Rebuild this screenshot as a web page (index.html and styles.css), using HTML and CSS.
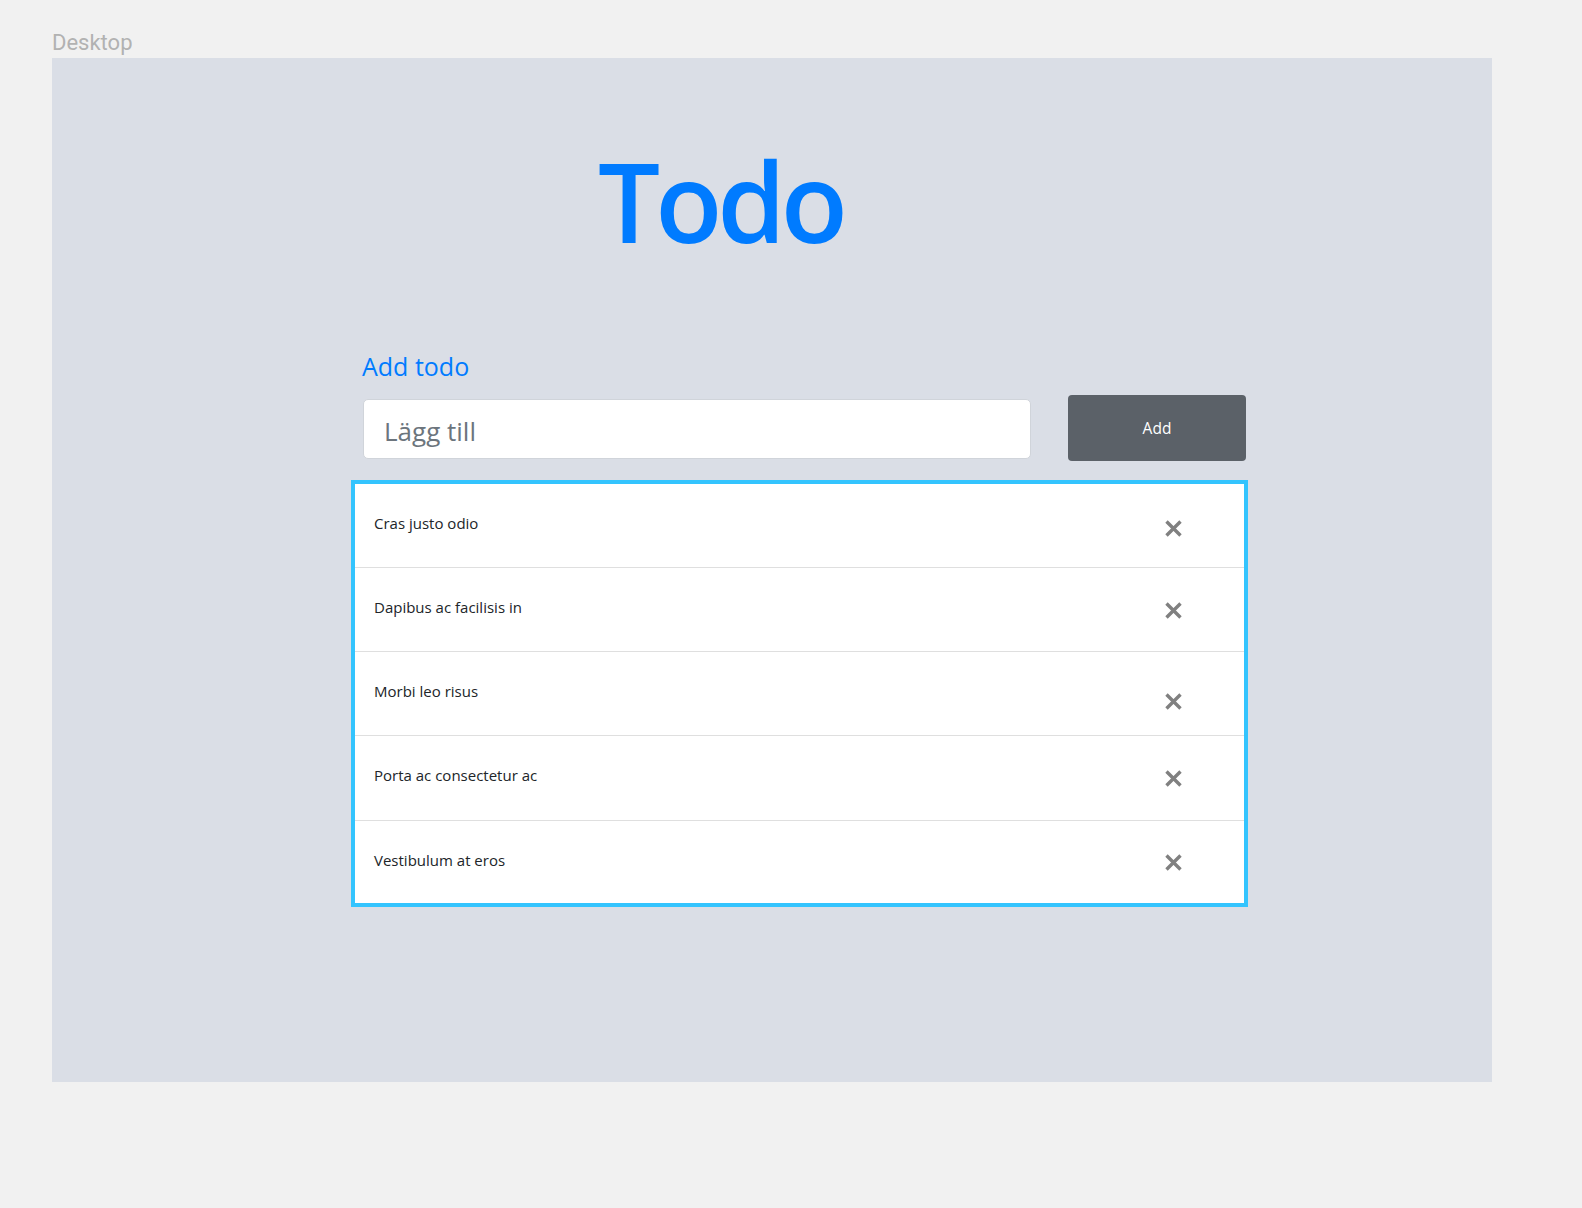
FILE: index.html
```html
<!DOCTYPE html>
<html lang="en">
<head>
<meta charset="utf-8">
<title>Todo</title>
<link rel="stylesheet" href="styles.css">
</head>
<body>
<div class="page">
  <div class="label">Desktop</div>
  <div class="frame">
    <h1 class="title">Todo</h1>
    <div class="todo">
      <h4 class="todo-heading">Add todo</h4>
      <div class="add-row">
        <input class="add-input" type="text" placeholder="Lägg till">
        <button class="add-btn" type="button">Add</button>
      </div>
      <ul class="list">
        <li class="item"><span class="item-text">Cras justo odio</span><span class="item-del item-del--lowish"><svg width="19" height="19" viewBox="0 0 19 19"><path d="M2.5 2.5L16.5 16.5M16.5 2.5L2.5 16.5" stroke="#808080" stroke-width="3.4" fill="none"/></svg></span></li>
        <li class="item"><span class="item-text">Dapibus ac facilisis in</span><span class="item-del"><svg width="19" height="19" viewBox="0 0 19 19"><path d="M2.5 2.5L16.5 16.5M16.5 2.5L2.5 16.5" stroke="#808080" stroke-width="3.4" fill="none"/></svg></span></li>
        <li class="item"><span class="item-text">Morbi leo risus</span><span class="item-del item-del--low"><svg width="19" height="19" viewBox="0 0 19 19"><path d="M2.5 2.5L16.5 16.5M16.5 2.5L2.5 16.5" stroke="#808080" stroke-width="3.4" fill="none"/></svg></span></li>
        <li class="item item--tall"><span class="item-text">Porta ac consectetur ac</span><span class="item-del"><svg width="19" height="19" viewBox="0 0 19 19"><path d="M2.5 2.5L16.5 16.5M16.5 2.5L2.5 16.5" stroke="#808080" stroke-width="3.4" fill="none"/></svg></span></li>
        <li class="item"><span class="item-text">Vestibulum at eros</span><span class="item-del"><svg width="19" height="19" viewBox="0 0 19 19"><path d="M2.5 2.5L16.5 16.5M16.5 2.5L2.5 16.5" stroke="#808080" stroke-width="3.4" fill="none"/></svg></span></li>
      </ul>
    </div>
  </div>
</div>
</body>
</html>
```

FILE: styles.css
```css
* { box-sizing: border-box; }
html, body {
  margin: 0;
  padding: 0;
  background: #f1f1f1;
}
.page {
  padding-left: 52px;
  height: 1208px;
}
.label {
  height: 58px;
  padding-top: 32px;
  font-family: Roboto, "Liberation Sans", sans-serif;
  font-size: 22px;
  line-height: 22px;
  color: #b2b2b2;
}
.frame {
  width: 1440px;
  height: 1024px;
  background: #dadee6;
  padding-top: 89px;
  font-family: "Open Sans", "Noto Sans", sans-serif;
}
.title {
  margin: 0 0 0 546px;
  font-family: "Open Sans", "Noto Sans", sans-serif;
  font-size: 110px;
  line-height: 106px;
  font-weight: 600;
  letter-spacing: -5px;
  color: #007bff;
}
.todo {
  margin: 101px 0 0 299px;
  width: 897px;
}
.todo-heading {
  margin: 0;
  padding-left: 11px;
  font-size: 25px;
  line-height: 25px;
  font-weight: 400;
  color: #007bff;
}
.add-row {
  display: flex;
  align-items: center;
  gap: 37px;
  margin-top: 16px;
  padding-left: 12px;
}
.add-input {
  width: 668px;
  height: 60px;
  margin-top: 2px;
  border: 1px solid #d0d4da;
  border-radius: 5px;
  background: #fff;
  padding: 4px 0 0 20px;
  font-family: "Open Sans", "Noto Sans", sans-serif;
  font-size: 26px;
  color: #495057;
  outline: none;
}
.add-input::placeholder {
  color: #6c757d;
}
.add-btn {
  width: 178px;
  height: 66px;
  border: none;
  border-radius: 4px;
  background: #5b6168;
  color: #fff;
  font-family: "Open Sans", "Noto Sans", sans-serif;
  font-size: 15.5px;
  padding: 0;
}
.list {
  list-style: none;
  margin: 19px 0 0 0;
  padding: 0;
  border: 4px solid #33c4fe;
  background: #fff;
}
.item {
  display: flex;
  align-items: flex-start;
  height: 84px;
  padding: 29px 0 0 19px;
  border-bottom: 1px solid #dfdfdf;
}
.item--tall {
  height: 85px;
}
.item:last-child {
  height: 82px;
  border-bottom: none;
}
.item-text {
  flex: 1;
  font-size: 15px;
  line-height: 20px;
  color: #212529;
}
.item-del {
  width: 80px;
  display: flex;
  margin-top: 4px;
}
.item-del--lowish { margin-top: 6px; }
.item-del--low { margin-top: 11px; }
.item:last-child .item-del { margin-top: 3px; }
```
